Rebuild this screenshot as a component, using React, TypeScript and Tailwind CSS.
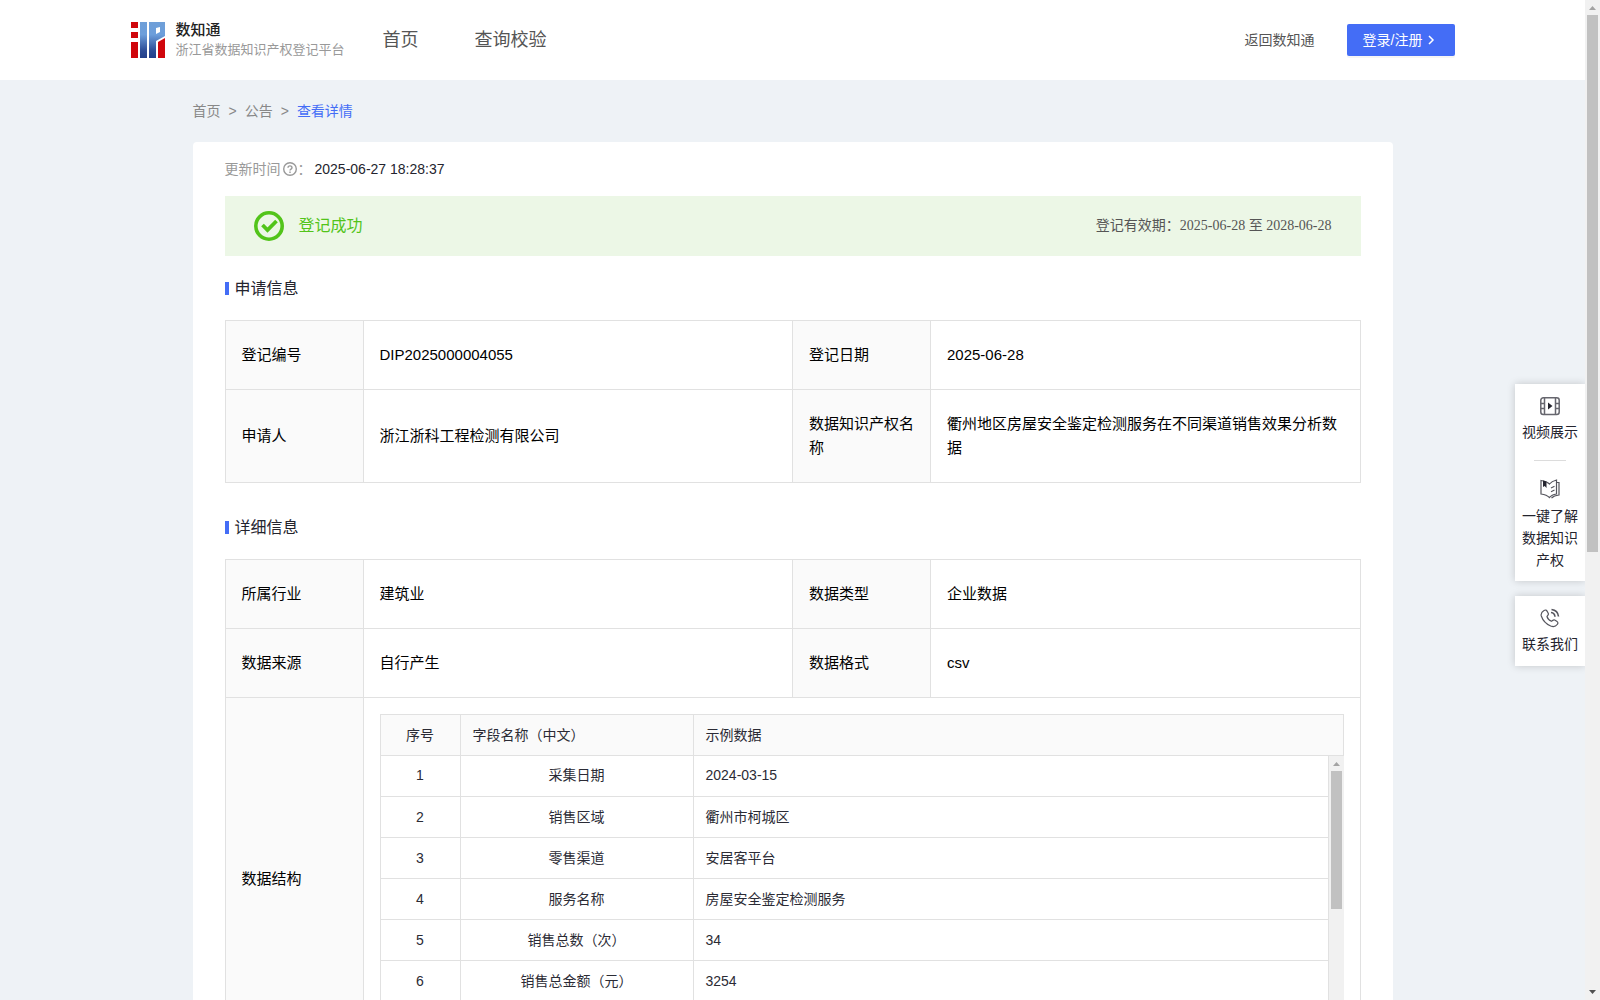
import React from 'react';

interface InfoRow {
  label: string;
  value: string;
  label2: string;
  value2: string;
}

interface FieldRow {
  id: number;
  name: string;
  sample: string;
}

const applyRows: InfoRow[] = [
  { label: '登记编号', value: 'DIP2025000004055', label2: '登记日期', value2: '2025-06-28' },
  {
    label: '申请人',
    value: '浙江浙科工程检测有限公司',
    label2: '数据知识产权名称',
    value2: '衢州地区房屋安全鉴定检测服务在不同渠道销售效果分析数据',
  },
];

const detailRows: InfoRow[] = [
  { label: '所属行业', value: '建筑业', label2: '数据类型', value2: '企业数据' },
  { label: '数据来源', value: '自行产生', label2: '数据格式', value2: 'csv' },
];

const fieldRows: FieldRow[] = [
  { id: 1, name: '采集日期', sample: '2024-03-15' },
  { id: 2, name: '销售区域', sample: '衢州市柯城区' },
  { id: 3, name: '零售渠道', sample: '安居客平台' },
  { id: 4, name: '服务名称', sample: '房屋安全鉴定检测服务' },
  { id: 5, name: '销售总数（次）', sample: '34' },
  { id: 6, name: '销售总金额（元）', sample: '3254' },
];

const Logo = () => (
  <svg width="34" height="36" viewBox="0 0 34 36" aria-hidden="true">
    <defs>
      <linearGradient id="logoBlue" gradientUnits="userSpaceOnUse" x1="0" y1="0" x2="0" y2="36">
        <stop offset="0" stopColor="#6f9fd8" />
        <stop offset="0.35" stopColor="#6c9edb" />
        <stop offset="0.8" stopColor="#2c4c96" />
        <stop offset="1" stopColor="#223f8a" />
      </linearGradient>
    </defs>
    <path fill="#d0060c" d="M0 0h7v6H0zM0 10h7v6H0zM0 20h7v16H0zM27 20l7-4v20h-7z" />
    <path fill="url(#logoBlue)" d="M9 0h7v36H9z" />
    <path fill="url(#logoBlue)" fillRule="evenodd" d="M18 0h16v14l-9 5v17h-7zM25 6v6l4-2V5z" />
  </svg>
);

const Header = () => (
  <header className="bg-white">
    <div className="max-w-[1324px] h-20 mx-auto flex items-center justify-between">
      <div className="flex items-center">
        <a href="#" className="flex items-center gap-[11px]">
          <Logo />
          <span className="flex flex-col">
            <span className="text-[15px] leading-5 font-medium text-[#222]">数知通</span>
            <span className="text-[13px] leading-5 text-[#999]">浙江省数据知识产权登记平台</span>
          </span>
        </a>
        <nav className="ml-[38px] flex gap-14 text-lg text-[#555]">
          <a href="#">首页</a>
          <a href="#">查询校验</a>
        </nav>
      </div>
      <div className="flex items-center gap-8 text-sm">
        <a href="#" className="text-[#555]">返回数知通</a>
        <button className="h-8 w-[108px] pl-4 flex items-center gap-1 rounded-xs bg-[#446df6] text-white shadow-[0_2px_0_rgba(0,0,0,0.04)]">
          登录/注册
          <svg width="12" height="12" viewBox="0 0 12 12" fill="none" stroke="currentColor" strokeWidth="1.5" aria-hidden="true">
            <path d="M3 2l4 4-4 4" />
          </svg>
        </button>
      </div>
    </div>
  </header>
);

const Breadcrumb = () => (
  <nav className="flex gap-2 py-[21px] text-sm text-[#888]">
    <a href="#">首页</a>
    <span>&gt;</span>
    <a href="#">公告</a>
    <span>&gt;</span>
    <a href="#" className="text-[#446df6]">查看详情</a>
  </nav>
);

const SectionTitle = ({ children }: { children: React.ReactNode }) => (
  <h2 className="flex items-center gap-[6px] h-[13px] mt-[26px] mb-[25px] text-base text-[#24242e]">
    <span className="w-1 h-[13px] bg-[#446df6]" />
    {children}
  </h2>
);

const labelCell = 'border border-[#e1e1e1] bg-[#fafafa] pl-4 pr-[14px] py-[22px] text-left font-normal';
const valueCell = 'border border-[#e1e1e1] pl-4 pr-[14px] py-[22px]';

const InfoTable = ({ rows, children }: { rows: InfoRow[]; children?: React.ReactNode }) => (
  <table className="w-full table-fixed border-collapse text-[15px] leading-6 text-black">
    <colgroup>
      <col className="w-[138px]" />
      <col />
      <col className="w-[138px]" />
      <col />
    </colgroup>
    <tbody>
      {rows.map((row) => (
        <tr key={row.label}>
          <th scope="row" className={labelCell}>{row.label}</th>
          <td className={valueCell}>{row.value}</td>
          <th scope="row" className={labelCell}>{row.label2}</th>
          <td className={valueCell}>{row.value2}</td>
        </tr>
      ))}
      {children}
    </tbody>
  </table>
);

const Arrow = ({ down = false }: { down?: boolean }) => (
  <svg width="15" height="15" viewBox="0 0 15 15" className="shrink-0" aria-hidden="true">
    {down ? <path fill="#505050" d="M4 5h7L7.5 9z" /> : <path fill="#a3a3a3" d="M4 10h7L7.5 6z" />}
  </svg>
);

const FieldTable = () => (
  <div className="text-sm leading-6 text-[#2b2b35]">
    <table className="w-full table-fixed border-collapse">
      <colgroup>
        <col className="w-20" />
        <col className="w-[233px]" />
        <col />
      </colgroup>
      <thead>
        <tr className="h-[41px] bg-[#fafafa] text-left">
          <th className="border border-[#e1e1e1] text-center font-normal">序号</th>
          <th className="border border-[#e1e1e1] px-3 font-normal">字段名称（中文）</th>
          <th className="border border-[#e1e1e1] px-3 font-normal">示例数据</th>
        </tr>
      </thead>
    </table>
    <div className="h-[287px] flex overflow-hidden">
      <div className="flex-1 -mt-px">
        <table className="w-full table-fixed border-collapse">
          <colgroup>
            <col className="w-20" />
            <col className="w-[233px]" />
            <col />
          </colgroup>
          <tbody>
            {fieldRows.map((row) => (
              <tr key={row.id} className="h-[41px]">
                <td className="border border-t-0 border-[#e1e1e1] text-center">{row.id}</td>
                <td className="border border-t-0 border-[#e1e1e1] text-center">{row.name}</td>
                <td className="border border-t-0 border-[#e1e1e1] px-3">{row.sample}</td>
              </tr>
            ))}
          </tbody>
        </table>
      </div>
      <div className="w-[15px] bg-[#f1f1f1] flex flex-col items-center">
        <Arrow />
        <div className="w-[11px] h-[138px] bg-[#c1c1c1]" />
      </div>
    </div>
  </div>
);

const SideTools = () => (
  <aside className="absolute right-0 top-96 w-[70px] flex flex-col gap-[15px] text-sm leading-[22px] text-[#24242e] text-center">
    <div className="bg-white shadow-[0_0_8px_rgba(0,0,0,0.18)] flex flex-col items-center pt-3 pb-[10px]">
      <a href="#" className="flex flex-col items-center gap-[5px] pb-[17px]">
        <svg width="20" height="20" viewBox="0 0 20 20" fill="none" stroke="#66666e" strokeWidth="1.5" aria-hidden="true">
          <rect x="0.8" y="1.8" width="18.4" height="16.6" rx="2.5" />
          <path d="M4.5 2v16M15.500 2v16M1 7.500h3.500M1 12.500h3.500M15.500 7.500H19M15.500 12.500H19" />
          <path d="M8 6.500l4.500 3.500L8 13.500z" fill="#24242e" stroke="none" />
        </svg>
        视频展示
      </a>
      <span className="w-8 h-px bg-[#dcdcdc]" />
      <a href="#" className="w-14 flex flex-col items-center gap-[6px] pt-[18px]">
        <svg width="20" height="20" viewBox="0 0 20 20" fill="none" stroke="#55555d" strokeWidth="1.2" aria-hidden="true">
          <path d="M1 1.500c3.500.3 6.500 1.500 8.500 3.500 1.500-2 4-3.300 7-4v14c-3 .5-5.500 1.500-7 3.500-2-2-5-3-8.500-3.500z" />
          <path d="M16.500 3.500H19V16c-3 .3-5.500 1-7.500 3.200" />
          <path d="M11 9l3.500-1.800M11 12.800l3.500-1.800" />
          <path d="M3 1.500l3.500 1V9L4.700 7 3 8z" fill="#24242e" stroke="none" />
        </svg>
        一键了解数据知识产权
      </a>
    </div>
    <a href="#" className="h-[70px] bg-white shadow-[0_0_8px_rgba(0,0,0,0.18)] flex flex-col items-center gap-[5px] pt-3">
      <svg width="20" height="20" viewBox="0 0 20 20" fill="none" stroke="#55555d" strokeWidth="1.2" aria-hidden="true">
        <path d="M4 2.5C5.5 1.5 6.500 2 7.300 3.500l1 2c.6 1.300-.8 2-1.300 3 .5 2 2.500 4 4.500 4.800 1.200-.6 1.800-2 3.200-1.300l2 1.200c1.500 1 1.500 2 .5 3.300-1.500 2-3.800 2.500-6.500 1.500C6 16 2.500 11.500 1.300 8 .6 5.500 2 3.700 4 2.500z" />
        <path d="M11 4.500c2.300.3 3.800 1.900 4 4.300M11.500 1.500c4 .5 6.600 3 7 7" strokeWidth="1.6" />
      </svg>
      联系我们
    </a>
  </aside>
);

const App: React.FC = () => {
  return (
    <div className="relative h-screen flex overflow-hidden bg-[#eef2f6] font-['Liberation_Sans','Noto_Sans_CJK_SC',sans-serif]">
      <div className="relative flex-1 overflow-hidden">
        <Header />
        <main className="max-w-[1200px] mx-auto">
          <Breadcrumb />
          <div className="bg-white rounded-sm px-8 pb-8">
            <div className="h-[54px] flex items-center text-sm text-[#999]">
              更新时间
              <svg width="16" height="16" viewBox="0 0 16 16" fill="none" stroke="#999" strokeWidth="1.4" className="ml-px" aria-hidden="true">
                <circle cx="8" cy="8" r="6.3" />
                <path d="M6 6.800c0-2.600 4-2.600 4 0 0 1.400-2 1.300-2 2.800M8 10.600v1.300" />
              </svg>
              ：
              <span className="ml-[3px] text-[#24242e]">2025-06-27 18:28:37</span>
            </div>
            <div className="h-15 bg-[#ecf7e6] px-[29px] flex items-center justify-between">
              <div className="flex items-center gap-[15px] text-base text-[#52c41a]">
                <svg width="30" height="30" viewBox="0 0 30 30" fill="none" stroke="#52c41a" aria-hidden="true">
                  <circle cx="15" cy="15" r="13.2" strokeWidth="3.6" />
                  <path d="M8.500 14l5 5 9-9" strokeWidth="3.8" />
                </svg>
                登记成功
              </div>
              <div className="text-sm text-[#555] font-['Liberation_Serif','Noto_Sans_CJK_SC',serif]">
                登记有效期：2025-06-28 至 2028-06-28
              </div>
            </div>
            <SectionTitle>申请信息</SectionTitle>
            <InfoTable rows={applyRows} />
            <div className="pt-3">
              <SectionTitle>详细信息</SectionTitle>
            </div>
            <InfoTable rows={detailRows}>
              <tr>
                <th scope="row" className={labelCell}>数据结构</th>
                <td colSpan={3} className="border border-[#e1e1e1] p-4">
                  <FieldTable />
                </td>
              </tr>
            </InfoTable>
          </div>
        </main>
        <SideTools />
      </div>
      <div className="w-[15px] bg-[#f1f1f1] flex flex-col items-center">
        <Arrow />
        <div className="w-[11px] h-[537px] bg-[#c1c1c1]" />
        <div className="mt-auto">
          <Arrow down />
        </div>
      </div>
    </div>
  );
};

export default App;
